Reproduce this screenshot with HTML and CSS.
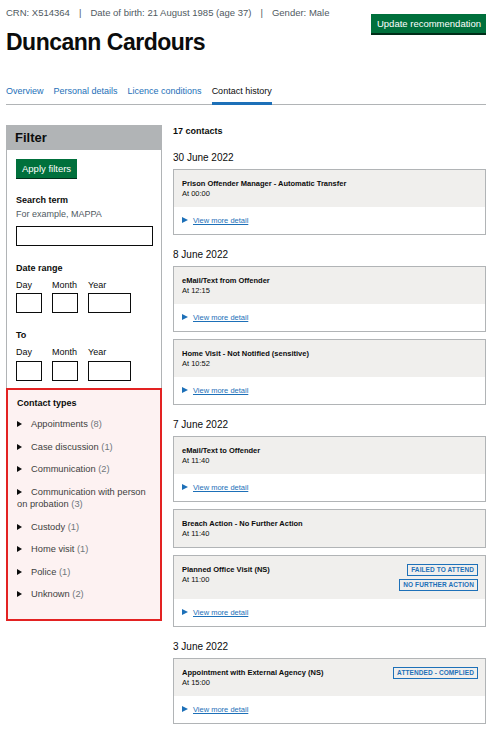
FILE: index.html
```html
<!DOCTYPE html>
<html lang="en">
<head>
<meta charset="utf-8">
<title>Contact history</title>
<link rel="stylesheet" href="styles.css">
</head>
<body>
<div class="page">
  <header class="top">
    <div class="ident">
      <p class="meta"><span>CRN: X514364</span><span class="sep">|</span><span>Date of birth: 21 August 1985 (age 37)</span><span class="sep">|</span><span>Gender: Male</span></p>
      <h1 class="name">Duncann Cardours</h1>
    </div>
    <a class="btn btn-top" href="#">Update recommendation</a>
  </header>

  <nav class="tabs">
    <a class="tab" href="#">Overview</a>
    <a class="tab" href="#">Personal details</a>
    <a class="tab" href="#">Licence conditions</a>
    <span class="tab active">Contact history</span>
  </nav>

  <div class="layout">
    <aside class="filter">
      <div class="filter-head">Filter</div>
      <div class="filter-body">
        <a class="btn btn-apply" href="#">Apply filters</a>
        <div class="field">
          <div class="label">Search term</div>
          <div class="hint">For example, MAPPA</div>
          <div class="input wide"></div>
        </div>
        <div class="field">
          <div class="label">Date range</div>
          <div class="date">
            <div class="date-item"><span>Day</span><div class="input d2"></div></div>
            <div class="date-item"><span>Month</span><div class="input d2"></div></div>
            <div class="date-item"><span>Year</span><div class="input d4"></div></div>
          </div>
        </div>
        <div class="field">
          <div class="label">To</div>
          <div class="date">
            <div class="date-item"><span>Day</span><div class="input d2"></div></div>
            <div class="date-item"><span>Month</span><div class="input d2"></div></div>
            <div class="date-item"><span>Year</span><div class="input d4"></div></div>
          </div>
        </div>
      </div>
      <div class="types">
        <div class="label">Contact types</div>
        <ul class="type-list">
          <li><span class="tri"></span>Appointments <span class="cnt">(8)</span></li>
          <li><span class="tri"></span>Case discussion <span class="cnt">(1)</span></li>
          <li><span class="tri"></span>Communication <span class="cnt">(2)</span></li>
          <li><span class="tri"></span>Communication with person on probation <span class="cnt">(3)</span></li>
          <li><span class="tri"></span>Custody <span class="cnt">(1)</span></li>
          <li><span class="tri"></span>Home visit <span class="cnt">(1)</span></li>
          <li><span class="tri"></span>Police <span class="cnt">(1)</span></li>
          <li><span class="tri"></span>Unknown <span class="cnt">(2)</span></li>
        </ul>
      </div>
    </aside>

    <main class="contacts">
      <p class="count">17 contacts</p>

      <h2 class="day">30 June 2022</h2>
      <div class="card">
        <div class="card-head"><div><div class="title">Prison Offender Manager - Automatic Transfer</div><div class="time">At 00:00</div></div></div>
        <div class="card-foot"><span class="mark"></span><a href="#">View more detail</a></div>
      </div>

      <h2 class="day">8 June 2022</h2>
      <div class="card">
        <div class="card-head"><div><div class="title">eMail/Text from Offender</div><div class="time">At 12:15</div></div></div>
        <div class="card-foot"><span class="mark"></span><a href="#">View more detail</a></div>
      </div>
      <div class="card">
        <div class="card-head"><div><div class="title">Home Visit - Not Notified (sensitive)</div><div class="time">At 10:52</div></div></div>
        <div class="card-foot"><span class="mark"></span><a href="#">View more detail</a></div>
      </div>

      <h2 class="day">7 June 2022</h2>
      <div class="card">
        <div class="card-head"><div><div class="title">eMail/Text to Offender</div><div class="time">At 11:40</div></div></div>
        <div class="card-foot"><span class="mark"></span><a href="#">View more detail</a></div>
      </div>
      <div class="card">
        <div class="card-head"><div><div class="title">Breach Action - No Further Action</div><div class="time">At 11:40</div></div></div>
      </div>
      <div class="card">
        <div class="card-head"><div><div class="title">Planned Office Visit (NS)</div><div class="time">At 11:00</div></div>
          <div class="tags"><span class="tag">Failed to attend</span><span class="tag">No further action</span></div></div>
        <div class="card-foot"><span class="mark"></span><a href="#">View more detail</a></div>
      </div>

      <h2 class="day">3 June 2022</h2>
      <div class="card">
        <div class="card-head"><div><div class="title">Appointment with External Agency (NS)</div><div class="time">At 15:00</div></div>
          <div class="tags"><span class="tag">Attended - Complied</span></div></div>
        <div class="card-foot"><span class="mark"></span><a href="#">View more detail</a></div>
      </div>
    </main>
  </div>
</div>
</body>
</html>
```
FILE: styles.css
```css
* { box-sizing: border-box; }
html, body { margin: 0; padding: 0; background: #fff; }
body {
  font-family: "Liberation Sans", Arial, sans-serif;
  color: #0b0c0c;
  font-size: 9.5px;
  line-height: 1.3;
}
.page { width: 480px; margin-left: 6px; padding-top: 7px; }

.top { display: flex; justify-content: space-between; align-items: flex-start; }
.meta { margin: 0; color: #505a5f; font-size: 9.5px; display: flex; }
.sep { margin: 0 9px; }
.name { margin: 10px 0 0; font-size: 23px; font-weight: 700; line-height: 1.15; letter-spacing: -0.5px; }

.btn {
  display: inline-block;
  background: #00703c;
  color: #fff;
  text-decoration: none;
  box-shadow: 0 2px 0 #002d18;
  font-size: 9.5px;
  line-height: 1;
}
.btn-top { margin-top: 7px; padding: 5px 5px 5px 6px; height: 19px; }

.tabs {
  display: flex;
  gap: 10px;
  margin-top: 30px;
  border-bottom: 1px solid #b1b4b6;
}
.tab { color: #1d70b8; text-decoration: none; padding: 0 0 7px; font-size: 9px; }
.tab.active { color: #0b0c0c; border-bottom: 3px solid #1d70b8; margin-bottom: -1px; padding-bottom: 5px; }

.layout { display: flex; gap: 11px; margin-top: 20px; align-items: flex-start; }

.filter { width: 156px; flex: none; border: 1px solid #b1b4b6; border-top: 0; background: #fff; }
.filter-head {
  background: #b1b4b6;
  font-weight: 700;
  font-size: 13px;
  height: 25px;
  padding: 5px 9px 0;
  margin: 0 -1px;
}
.filter-body { padding: 9px 9px 7px; }
.btn-apply { padding: 5px 6px; height: 19px; box-shadow: 0 1px 0 #002d18; }
.field { margin-top: 17px; }
.field + .field { margin-top: 17px; }
.label { font-weight: 700; font-size: 9px; }
.hint { color: #505a5f; font-size: 9px; margin-top: 2px; }
.input { border: 1px solid #0b0c0c; background: #fff; height: 20px; }
.input.wide { width: 137px; margin-top: 5px; }
.date { display: flex; gap: 10px; margin-top: 5px; }
.date-item { display: flex; flex-direction: column; gap: 2px; font-size: 9px; }
.d2 { width: 26px; }
.d4 { width: 43px; }

.types {
  margin: 0 -1px -1px;
  border: 2px solid #e32222;
  background: #fdf2f2;
  padding: 8px 9px 8px;
}
.type-list { list-style: none; margin: 9px 0 0; padding: 0; color: #3d3f41; }
.type-list li { font-size: 9.3px; line-height: 12.5px; margin-bottom: 10px; }
.tri {
  display: inline-block;
  width: 0; height: 0;
  border-left: 5px solid #0b0c0c;
  border-top: 3.5px solid transparent;
  border-bottom: 3.5px solid transparent;
  margin: 0 9px 0 0;
  vertical-align: 0;
}
.cnt { color: #6f777b; }

.contacts { width: 313px; flex: none; }
.count { margin: 0; font-weight: 700; font-size: 9px; padding-top: 1px; }
.day { margin: 13px 0 5px; font-size: 10px; font-weight: 400; color: #0b0c0c; }
.card { border: 1px solid #b1b4b6; margin-bottom: 7px; }
.card-head {
  background: #f0efed;
  display: flex;
  justify-content: space-between;
  align-items: flex-start;
  padding: 9px 7px 8px 8px;
  min-height: 35px;
}
.title { font-weight: 700; font-size: 7.5px; line-height: 10px; }
.time { font-size: 7.5px; line-height: 10px; }
.tags { display: flex; flex-direction: column; align-items: flex-end; gap: 3px; margin-top: -1px; }
.tag {
  border: 1px solid #1d70b8;
  color: #1d70b8;
  text-transform: uppercase;
  font-weight: 700;
  font-size: 6.5px;
  padding: 1px 3px;
  line-height: 8px;
  letter-spacing: 0.1px;
}
.card-foot { padding: 9px 8px 8px; font-size: 7.5px; line-height: 10px; background: #fff; }
.mark {
  display: inline-block;
  width: 0; height: 0;
  border-left: 6px solid #1d70b8;
  border-top: 3.5px solid transparent;
  border-bottom: 3.5px solid transparent;
  margin-right: 5px;
  vertical-align: 0;
}
.card-foot a { color: #1d70b8; text-decoration: underline; }
```
